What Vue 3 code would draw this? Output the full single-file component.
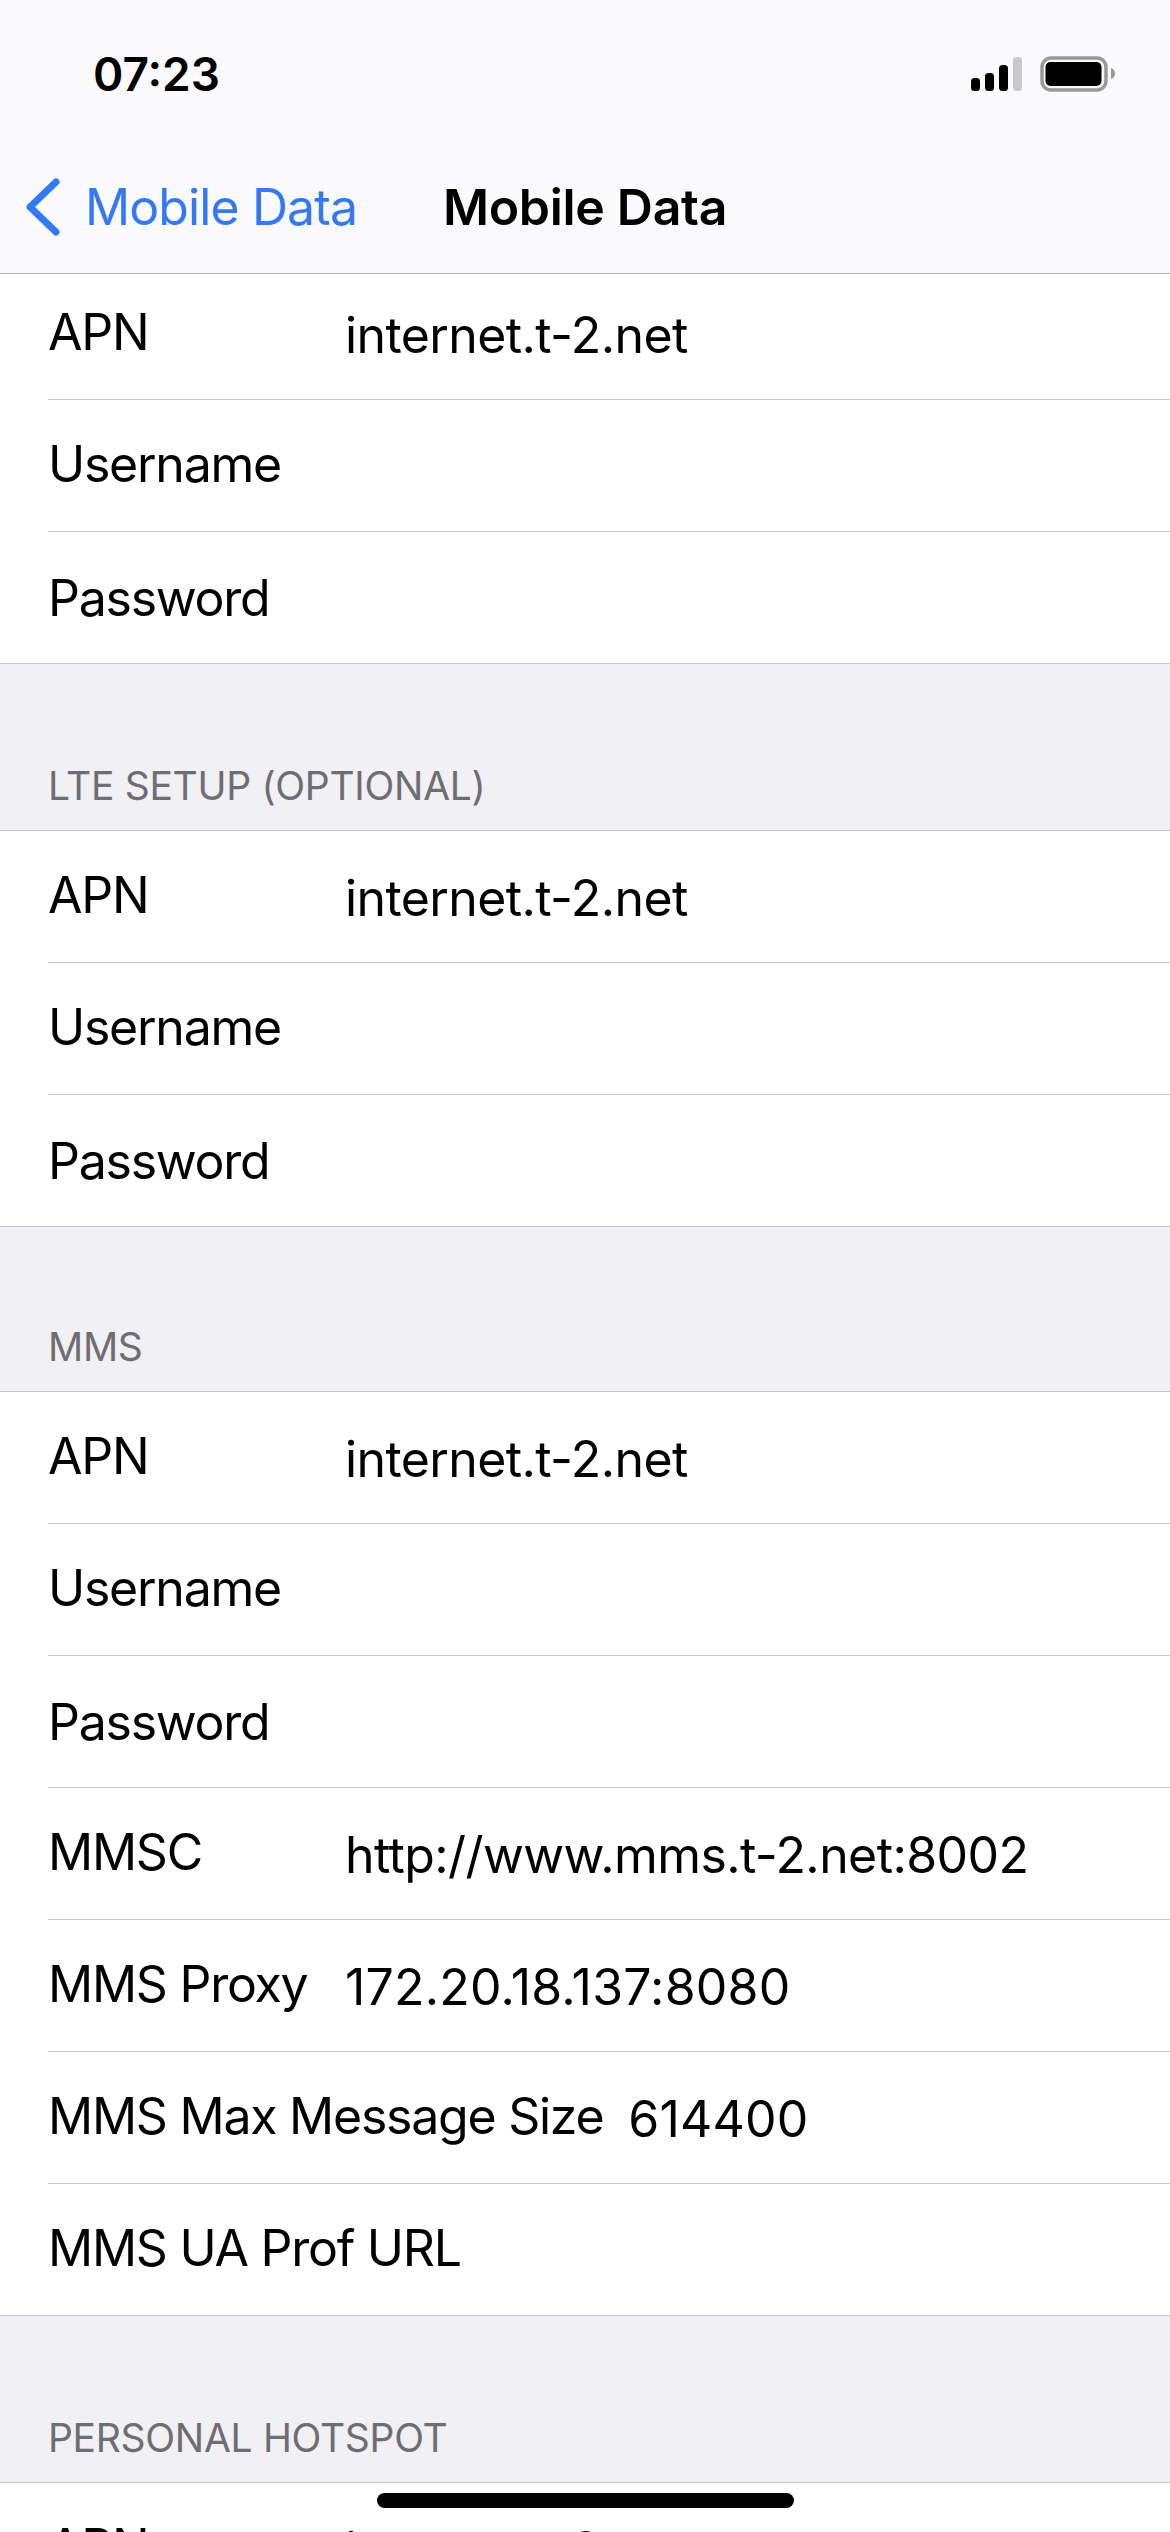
<template>
  <div class="screen">
    <header class="top">
      <div class="status">
        <span class="time">07:23</span>
        <div class="status-icons">
          <svg class="signal" width="51" height="34" viewBox="0 0 51 34">
            <rect x="0" y="21" width="9" height="13" rx="3.5" fill="#000" />
            <rect x="14" y="16" width="9" height="18" rx="3.5" fill="#000" />
            <rect x="28" y="8" width="9" height="26" rx="3.5" fill="#000" />
            <rect x="42" y="0" width="9" height="34" rx="3.5" fill="#c9c9cb" />
          </svg>
          <svg class="battery" width="75" height="36" viewBox="0 0 75 36">
            <rect x="2" y="2" width="64" height="32" rx="9" fill="none" stroke="#999" stroke-width="3.5" />
            <rect x="5.5" y="6" width="56" height="24" rx="5" fill="#000" />
            <path d="M71 12 C74 13 75 15 75 17.5 C75 20 74 22 71 23 Z" fill="#999" />
          </svg>
        </div>
      </div>
      <nav class="nav">
        <a class="back">
          <svg width="38" height="62" viewBox="0 0 38 62">
            <path d="M32 6 L6 31 L32 56" fill="none" stroke="#3478f6" stroke-width="7" stroke-linecap="round" stroke-linejoin="round" />
          </svg>
          <span>Mobile Data</span>
        </a>
        <h1 class="title">Mobile Data</h1>
      </nav>
    </header>

    <section v-for="(group, i) in groups" :key="i">
      <div v-if="group.title" class="group-title" :style="{ height: group.height + 'px' }">{{ group.title }}</div>
      <div class="rows" :class="{ first: i === 0 }">
        <div v-for="row in group.rows" :key="row.label" class="row">
          <div class="row-inner">
            <span class="label" :class="{ low: row.label === 'Password' }">{{ row.label }}</span>
            <span class="value" :class="{ numeric: row.numeric }">{{ row.value }}</span>
          </div>
        </div>
      </div>
    </section>

    <div class="home-bar"></div>
  </div>
</template>

<script setup>
const apnRows = [
  { label: "APN", value: "internet.t-2.net" },
  { label: "Username", value: "" },
  { label: "Password", value: "" },
];

const groups = [
  { title: "", rows: apnRows },
  { title: "LTE SETUP (OPTIONAL)", height: 167, rows: apnRows },
  {
    title: "MMS",
    height: 165,
    rows: [
      ...apnRows,
      { label: "MMSC", value: "http://www.mms.t-2.net:8002" },
      { label: "MMS Proxy", value: "172.20.18.137:8080", numeric: true },
      { label: "MMS Max Message Size", value: "614400", numeric: true },
      { label: "MMS UA Prof URL", value: "" },
    ],
  },
  { title: "PERSONAL HOTSPOT", height: 167, rows: apnRows },
];
</script>

<style>
html,
body {
  margin: 0;
  background: #f0f0f5;
}
</style>

<style scoped>
.screen {
  position: relative;
  width: 1170px;
  height: 2532px;
  overflow: hidden;
  background: #f0f0f5;
  font-family: Inter, "Liberation Sans", sans-serif;
  color: #000;
}
.top {
  height: 274px;
  box-sizing: border-box;
  background: #fafafc;
  border-bottom: 1px solid #b2b2b2;
}
.status {
  height: 150px;
  display: flex;
  justify-content: space-between;
  align-items: flex-start;
  padding: 0 55px 0 93px;
  box-sizing: border-box;
}
.time {
  margin-top: 46px;
  font-size: 46px;
  line-height: 56px;
  font-weight: 600;
}
.status-icons {
  display: flex;
  align-items: flex-start;
  gap: 18px;
  margin-top: 56px;
}
.signal {
  margin-top: 1px;
}
.nav {
  position: relative;
  height: 123px;
}
.back {
  display: flex;
  align-items: center;
  height: 114px;
  padding-left: 24px;
  gap: 23px;
  color: #3478f6;
  font-size: 50px;
  letter-spacing: -0.9px;
}
.title {
  position: absolute;
  top: 0;
  left: 0;
  right: 0;
  margin: 0;
  height: 114px;
  line-height: 114px;
  text-align: center;
  font-size: 50px;
  font-weight: 600;
  letter-spacing: -0.3px;
}
.group-title {
  box-sizing: border-box;
  padding: 0 48px 20px;
  display: flex;
  align-items: flex-end;
  font-size: 39px;
  line-height: 48px;
  letter-spacing: -0.3px;
  color: #6d6d72;
  border-bottom: 1px solid #c6c6c8;
}
.rows {
  background: #fff;
  border-bottom: 1px solid #c6c6c8;
}
.row {
  padding-left: 48px;
}
.row-inner {
  height: 132px;
  box-sizing: border-box;
  padding-bottom: 3px;
  display: flex;
  align-items: center;
  font-size: 50px;
  border-bottom: 1px solid #c6c6c8;
}
.rows.first .row:first-child .row-inner {
  height: 126px;
  padding-bottom: 9px;
}
.row:last-child .row-inner {
  border-bottom: 0;
  height: 131px;
}
.label {
  min-width: 272px;
  margin-right: 25px;
  white-space: nowrap;
  letter-spacing: -1.25px;
}
.label.low {
  margin-top: 4px;
}
.value {
  margin-top: 6px;
  white-space: nowrap;
  letter-spacing: -0.6px;
}
.value.numeric {
  letter-spacing: 0.2px;
}
.home-bar {
  position: absolute;
  left: 377px;
  top: 2493px;
  width: 417px;
  height: 15px;
  border-radius: 8px;
  background: #000;
}
</style>
